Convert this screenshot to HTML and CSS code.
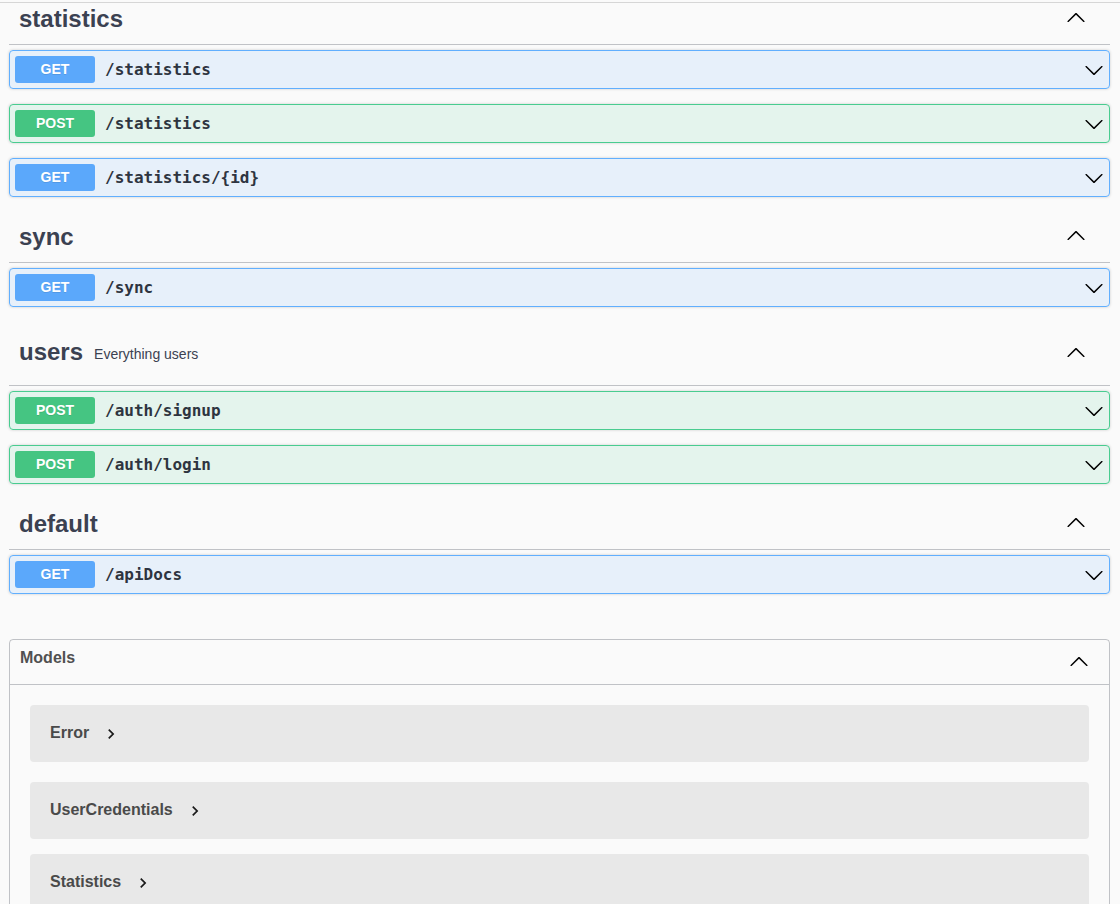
FILE: index.html
```html
<!DOCTYPE html>
<html lang="en">
<head>
<meta charset="utf-8">
<title>API</title>
<link rel="stylesheet" href="styles.css">
</head>
<body>
<div class="topline"></div>
<div class="wrapper">

  <section class="tag-section">
    <h3 class="tag"><span class="tag-name">statistics</span><span class="tag-desc"></span>
      <svg class="arrow-up" viewBox="0 0 20 20" width="20" height="20"><path d="M17.418 14.908c.272.268.709.268.979 0s.271-.701 0-.969l-7.908-7.83c-.27-.268-.707-.268-.979 0l-7.908 7.83c-.27.268-.27.701 0 .969.271.268.709.268.979 0L10 7.767l7.418 7.141z"/></svg>
    </h3>
    <div class="opblock get"><div class="summary"><span class="method">GET</span><span class="path">/statistics</span><svg class="arrow-down" viewBox="0 0 20 20" width="20" height="20"><path d="M17.418 6.109c.272-.268.709-.268.979 0s.271.701 0 .969l-7.908 7.83c-.27.268-.707.268-.979 0l-7.908-7.83c-.27-.268-.27-.701 0-.969.271-.268.709-.268.979 0L10 13.25l7.418-7.141z"/></svg></div></div>
    <div class="opblock post"><div class="summary"><span class="method">POST</span><span class="path">/statistics</span><svg class="arrow-down" viewBox="0 0 20 20" width="20" height="20"><path d="M17.418 6.109c.272-.268.709-.268.979 0s.271.701 0 .969l-7.908 7.83c-.27.268-.707.268-.979 0l-7.908-7.83c-.27-.268-.27-.701 0-.969.271-.268.709-.268.979 0L10 13.25l7.418-7.141z"/></svg></div></div>
    <div class="opblock get"><div class="summary"><span class="method">GET</span><span class="path">/statistics/{id}</span><svg class="arrow-down" viewBox="0 0 20 20" width="20" height="20"><path d="M17.418 6.109c.272-.268.709-.268.979 0s.271.701 0 .969l-7.908 7.83c-.27.268-.707.268-.979 0l-7.908-7.83c-.27-.268-.27-.701 0-.969.271-.268.709-.268.979 0L10 13.25l7.418-7.141z"/></svg></div></div>
  </section>

  <section class="tag-section">
    <h3 class="tag"><span class="tag-name">sync</span><span class="tag-desc"></span>
      <svg class="arrow-up" viewBox="0 0 20 20" width="20" height="20"><path d="M17.418 14.908c.272.268.709.268.979 0s.271-.701 0-.969l-7.908-7.83c-.27-.268-.707-.268-.979 0l-7.908 7.83c-.27.268-.27.701 0 .969.271.268.709.268.979 0L10 7.767l7.418 7.141z"/></svg>
    </h3>
    <div class="opblock get"><div class="summary"><span class="method">GET</span><span class="path">/sync</span><svg class="arrow-down" viewBox="0 0 20 20" width="20" height="20"><path d="M17.418 6.109c.272-.268.709-.268.979 0s.271.701 0 .969l-7.908 7.83c-.27.268-.707.268-.979 0l-7.908-7.83c-.27-.268-.27-.701 0-.969.271-.268.709-.268.979 0L10 13.25l7.418-7.141z"/></svg></div></div>
  </section>

  <section class="tag-section">
    <h3 class="tag tag-tall"><span class="tag-name">users</span><span class="tag-desc">Everything users</span>
      <svg class="arrow-up" viewBox="0 0 20 20" width="20" height="20"><path d="M17.418 14.908c.272.268.709.268.979 0s.271-.701 0-.969l-7.908-7.83c-.27-.268-.707-.268-.979 0l-7.908 7.83c-.27.268-.27.701 0 .969.271.268.709.268.979 0L10 7.767l7.418 7.141z"/></svg>
    </h3>
    <div class="opblock post"><div class="summary"><span class="method">POST</span><span class="path">/auth/signup</span><svg class="arrow-down" viewBox="0 0 20 20" width="20" height="20"><path d="M17.418 6.109c.272-.268.709-.268.979 0s.271.701 0 .969l-7.908 7.83c-.27.268-.707.268-.979 0l-7.908-7.83c-.27-.268-.27-.701 0-.969.271-.268.709-.268.979 0L10 13.25l7.418-7.141z"/></svg></div></div>
    <div class="opblock post"><div class="summary"><span class="method">POST</span><span class="path">/auth/login</span><svg class="arrow-down" viewBox="0 0 20 20" width="20" height="20"><path d="M17.418 6.109c.272-.268.709-.268.979 0s.271.701 0 .969l-7.908 7.83c-.27.268-.707.268-.979 0l-7.908-7.83c-.27-.268-.27-.701 0-.969.271-.268.709-.268.979 0L10 13.25l7.418-7.141z"/></svg></div></div>
  </section>

  <section class="tag-section">
    <h3 class="tag"><span class="tag-name">default</span><span class="tag-desc"></span>
      <svg class="arrow-up" viewBox="0 0 20 20" width="20" height="20"><path d="M17.418 14.908c.272.268.709.268.979 0s.271-.701 0-.969l-7.908-7.83c-.27-.268-.707-.268-.979 0l-7.908 7.83c-.27.268-.27.701 0 .969.271.268.709.268.979 0L10 7.767l7.418 7.141z"/></svg>
    </h3>
    <div class="opblock get"><div class="summary"><span class="method">GET</span><span class="path">/apiDocs</span><svg class="arrow-down" viewBox="0 0 20 20" width="20" height="20"><path d="M17.418 6.109c.272-.268.709-.268.979 0s.271.701 0 .969l-7.908 7.83c-.27.268-.707.268-.979 0l-7.908-7.83c-.27-.268-.27-.701 0-.969.271-.268.709-.268.979 0L10 13.25l7.418-7.141z"/></svg></div></div>
  </section>

  <section class="models">
    <h4 class="models-head"><span class="models-title">Models</span>
      <svg class="arrow-up models-arrow" viewBox="0 0 20 20" width="20" height="20"><path d="M17.418 14.908c.272.268.709.268.979 0s.271-.701 0-.969l-7.908-7.83c-.27-.268-.707-.268-.979 0l-7.908 7.83c-.27.268-.27.701 0 .969.271.268.709.268.979 0L10 7.767l7.418 7.141z"/></svg>
    </h4>
    <div class="models-content">
      <div class="model-container first"><span class="model-title">Error</span><svg class="chev" viewBox="0 0 24 24" width="20" height="20"><path d="M10 6L8.59 7.41 13.17 12l-4.58 4.59L10 18l6-6z"/></svg></div>
      <div class="model-container"><span class="model-title">UserCredentials</span><svg class="chev" viewBox="0 0 24 24" width="20" height="20"><path d="M10 6L8.59 7.41 13.17 12l-4.58 4.59L10 18l6-6z"/></svg></div>
      <div class="model-container"><span class="model-title">Statistics</span><svg class="chev" viewBox="0 0 24 24" width="20" height="20"><path d="M10 6L8.59 7.41 13.17 12l-4.58 4.59L10 18l6-6z"/></svg></div>
    </div>
  </section>

</div>
</body>
</html>
```

FILE: styles.css
```css
html, body {
  margin: 0;
  background: #fafafa;
}

body {
  font-family: "Liberation Sans", Arial, sans-serif;
  color: #3b4151;
  overflow: hidden;
}

.topline {
  position: fixed;
  top: 2px;
  left: 0;
  right: 0;
  height: 1px;
  background: #d6d6d6;
  z-index: 5;
}

.wrapper {
  margin-top: -6px;
  padding: 0 10px 0 9px;
}

.tag-section {
  display: flow-root;
}

.tag {
  display: flex;
  align-items: center;
  box-sizing: content-box;
  height: 50px;
  margin: 0 0 5px;
  padding: 0 24px 0 10px;
  border-bottom: 1px solid rgba(59, 65, 81, 0.3);
  font-size: 24px;
  font-weight: 700;
  color: #3b4151;
}

.tag-name {
  margin-bottom: 1px;
}

.tag-tall {
  height: 63px;
}

.tag-tall .tag-name {
  margin-bottom: 3px;
}

.tag-desc {
  flex: 1;
  padding: 0 11px;
  font-size: 14px;
  font-weight: 400;
}

.arrow-up,
.arrow-down {
  flex: none;
  fill: #000;
}

.tag .arrow-up {
  margin-bottom: 4px;
}

.opblock {
  margin: 0 0 15px;
  border: 1px solid;
  border-radius: 4px;
  box-shadow: 0 0 3px rgba(0, 0, 0, 0.19);
}

.opblock.get {
  background: rgba(97, 175, 254, 0.12);
  border-color: #61affe;
}

.opblock.post {
  background: rgba(73, 204, 144, 0.12);
  border-color: #49cc90;
}

.summary {
  display: flex;
  align-items: center;
  padding: 5px;
}

.method {
  flex: none;
  width: 80px;
  padding: 6px 0;
  line-height: 15px;
  text-align: center;
  border-radius: 3px;
  color: #fff;
  font-size: 14px;
  font-weight: 700;
  text-shadow: 0 1px 0 rgba(0, 0, 0, 0.1);
}

.get .method {
  background: #5ba8fb;
}

.post .method {
  background: #45c582;
}

.path {
  flex: 1;
  padding: 0 10px;
  font-family: "DejaVu Sans Mono", "Liberation Mono", monospace;
  font-size: 16px;
  font-weight: 700;
  color: #2e3440;
}

.models {
  margin: 30px 0 0;
  border: 1px solid rgba(59, 65, 81, 0.3);
  border-radius: 4px;
}

.models-head {
  display: flex;
  align-items: center;
  justify-content: space-between;
  height: 44px;
  margin: 0;
  padding: 0 20px 0 10px;
  border-bottom: 1px solid rgba(59, 65, 81, 0.3);
  font-size: 16px;
  font-weight: 700;
  color: #505050;
}

.models-title {
  margin-bottom: 9px;
}

.models-arrow {
  margin-bottom: 3px;
}

.models-content {
  padding: 20px 0 20px;
}

.model-container {
  display: flex;
  align-items: center;
  height: 57px;
  margin: 0 20px 15px;
  padding: 0 20px;
  background: #e8e8e8;
  border-radius: 4px;
}

.model-container.first {
  margin-bottom: 20px;
}

.model-title {
  font-size: 16px;
  font-weight: 700;
  color: #4a4a4a;
  margin-bottom: 2px;
}

.chev {
  flex: none;
  margin-left: 12px;
  fill: #1a1a1a;
}
```
